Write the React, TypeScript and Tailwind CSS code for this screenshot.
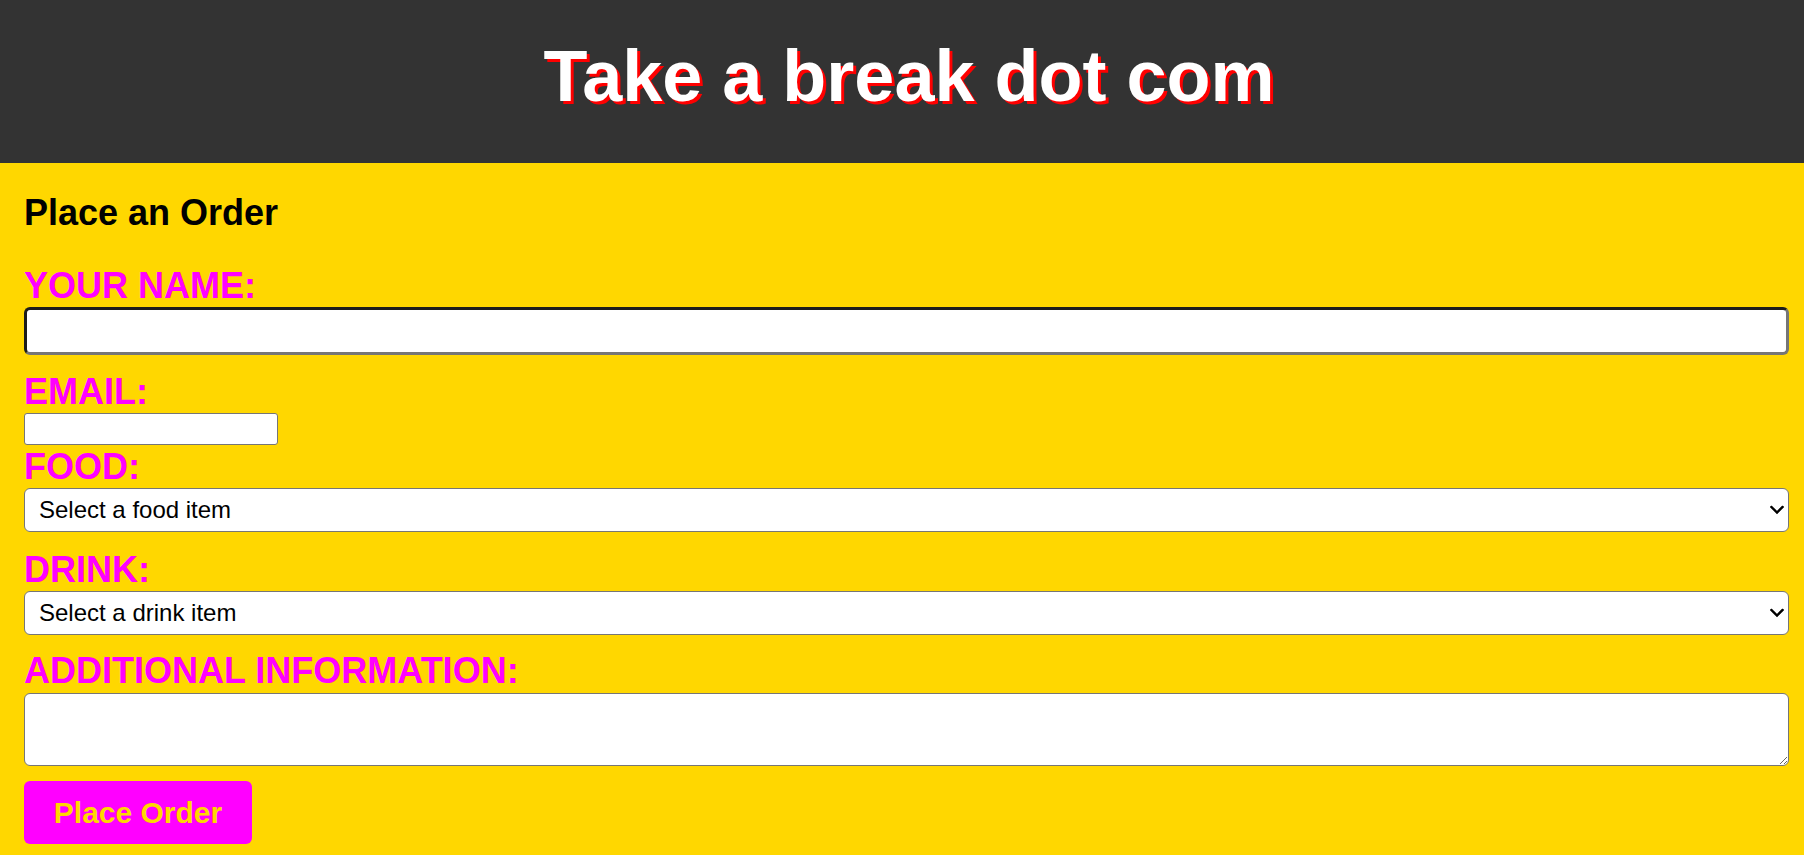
import React from "react";

function Chevron() {
  return (
    <svg
      className="pointer-events-none absolute right-[5px] top-1/2 -translate-y-1/2"
      width="14"
      height="9"
      viewBox="0 0 14 9"
      fill="none"
    >
      <polyline points="1.5,1.5 7,7 12.5,1.5" stroke="#000" strokeWidth="2.4" strokeLinecap="square" />
    </svg>
  );
}

export default function App() {
  return (
    <div className="min-h-[855px] bg-[#ffd700] font-['Liberation_Sans',Arial,sans-serif]">
      <header className="h-[163px] bg-[#333333] pt-[40px] pl-[14px]">
        <h1 className="text-center text-[72px] leading-[72px] font-bold text-white [text-shadow:3px_3px_0_#ff0000]">
          Take a break dot com
        </h1>
      </header>
      <main className="pl-[24px] pr-[15px] pb-[11px]">
        <h2 className="mt-[32px] text-[36px] leading-[36px] font-bold text-black">Place an Order</h2>
        <form className="flex flex-col" onSubmit={(e) => e.preventDefault()}>
          <label className="mt-[37px] text-[36px] leading-[35px] font-bold text-[#ff00ff]">YOUR NAME:</label>
          <input
            type="text"
            className="mt-[4px] h-[48px] w-full rounded-[6px] border-[3px] border-t-[#1c1c1c] border-l-[#1c1c1c] border-b-[#767676] border-r-[#767676] bg-white outline-none"
          />
          <label className="mt-[19px] text-[36px] leading-[35px] font-bold text-[#ff00ff]">EMAIL:</label>
          <input
            type="email"
            className="mt-[4px] h-[32px] w-[254px] rounded-[3px] border border-[#767676] bg-white outline-none"
          />
          <label className="mt-[4px] text-[36px] leading-[35px] font-bold text-[#ff00ff]">FOOD:</label>
          <div className="relative mt-[4px]">
            <select className="h-[44px] w-full appearance-none rounded-[6px] border border-[#767676] bg-white pl-[14px] text-[24px] text-black outline-none">
              <option>Select a food item</option>
            </select>
            <Chevron />
          </div>
          <label className="mt-[20px] text-[36px] leading-[35px] font-bold text-[#ff00ff]">DRINK:</label>
          <div className="relative mt-[4px]">
            <select className="h-[44px] w-full appearance-none rounded-[6px] border border-[#767676] bg-white pl-[14px] text-[24px] text-black outline-none">
              <option>Select a drink item</option>
            </select>
            <Chevron />
          </div>
          <label className="mt-[18px] text-[36px] leading-[35px] font-bold text-[#ff00ff]">ADDITIONAL INFORMATION:</label>
          <textarea className="mt-[5px] block h-[73px] w-full rounded-[6px] border border-[#767676] bg-white outline-none" />
          <div className="mt-[15px]">
            <button
              type="submit"
              className="h-[63px] w-[228px] rounded-[6px] bg-[#ff00ff] text-[30px] font-bold text-[#ffd700]"
            >
              Place Order
            </button>
          </div>
        </form>
      </main>
    </div>
  );
}
